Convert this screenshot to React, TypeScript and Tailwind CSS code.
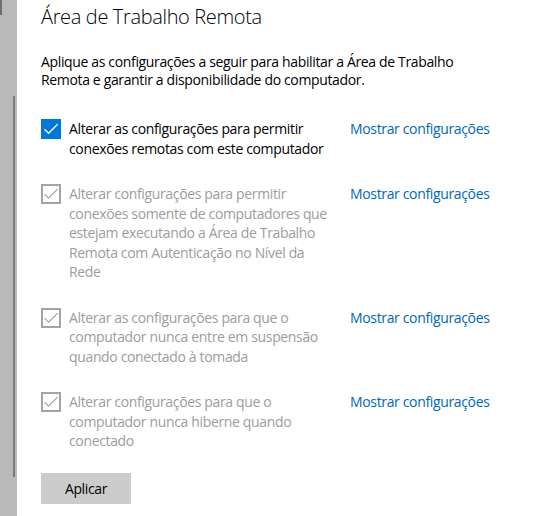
import React from 'react'

interface Setting {
  lines: string[]
  checked: boolean
  enabled: boolean
}

const SETTINGS: Setting[] = [
  {
    lines: ['Alterar as configurações para permitir', 'conexões remotas com este computador'],
    checked: true,
    enabled: true,
  },
  {
    lines: [
      'Alterar configurações para permitir',
      'conexões somente de computadores que',
      'estejam executando a Área de Trabalho',
      'Remota com Autenticação no Nível da',
      'Rede',
    ],
    checked: true,
    enabled: false,
  },
  {
    lines: [
      'Alterar as configurações para que o',
      'computador nunca entre em suspensão',
      'quando conectado à tomada',
    ],
    checked: true,
    enabled: false,
  },
  {
    lines: ['Alterar configurações para que o', 'computador nunca hiberne quando', 'conectado'],
    checked: true,
    enabled: false,
  },
]

function CheckBox({ enabled }: { enabled: boolean }) {
  if (enabled) {
    return (
      <div className="w-5 h-5 shrink-0 bg-[#0078d7] flex items-center justify-center">
        <svg viewBox="0 0 20 20" className="w-5 h-5" fill="none" stroke="#ffffff" strokeWidth="1.3">
          <path d="M3.5 10.2 L7.6 14.3 L16.6 5.3" />
        </svg>
      </div>
    )
  }
  return (
    <div className="w-5 h-5 shrink-0 border-2 border-[#a3a3a3] bg-white flex items-center justify-center">
      <svg viewBox="0 0 16 16" className="w-4 h-4" fill="none" stroke="#a3a3a3" strokeWidth="1.2">
        <path d="M1.6 8.2 L5.6 12.2 L14.6 3.2" />
      </svg>
    </div>
  )
}

export default function App() {
  return (
    <div
      className="w-[542px] h-[516px] flex bg-white overflow-hidden tracking-[-0.35px]"
      style={{ fontFamily: '"Open Sans", "Noto Sans", sans-serif' }}
    >
      {/* left pane edge with scrollbar */}
      <div className="w-[17px] shrink-0 bg-[#b9b9b9] relative">
        <div className="absolute left-0 top-0 w-[2px] h-[15px] bg-[#6e6e6e]" />
        <div className="absolute left-[13px] top-[96px] w-[2px] h-[381px] bg-[#7b7b7b]" />
      </div>

      <div className="flex-1 pl-6 flex flex-col">
        <h1 className="mt-[3px] text-[20px] font-light leading-[28px] text-black">Área de Trabalho Remota</h1>

        <p className="mt-[22px] text-[14px] leading-[18px] text-black">
          Aplique as configurações a seguir para habilitar a Área de Trabalho
          <br />
          Remota e garantir a disponibilidade do computador.
        </p>

        <div className="mt-[30px] flex flex-col gap-[26px]">
          {SETTINGS.map((s, i) => (
            <div key={i} className="flex items-start">
              <CheckBox enabled={s.enabled} />
              <div
                className={`ml-2 w-[273px] text-[14px] leading-[19.5px] ${
                  s.enabled ? 'text-black' : 'text-[#9c9c9c]'
                }`}
              >
                {s.lines.map((l, j) => (
                  <span key={j} className="block whitespace-nowrap">
                    {l}
                  </span>
                ))}
              </div>
              <a className="ml-2 text-[14px] leading-[19.5px] text-[#0067b8] whitespace-nowrap cursor-pointer">
                Mostrar configurações
              </a>
            </div>
          ))}
        </div>

        <button className="mt-[22px] w-[90px] h-[31px] bg-[#cccccc] text-[14px] text-black">Aplicar</button>
      </div>
    </div>
  )
}
